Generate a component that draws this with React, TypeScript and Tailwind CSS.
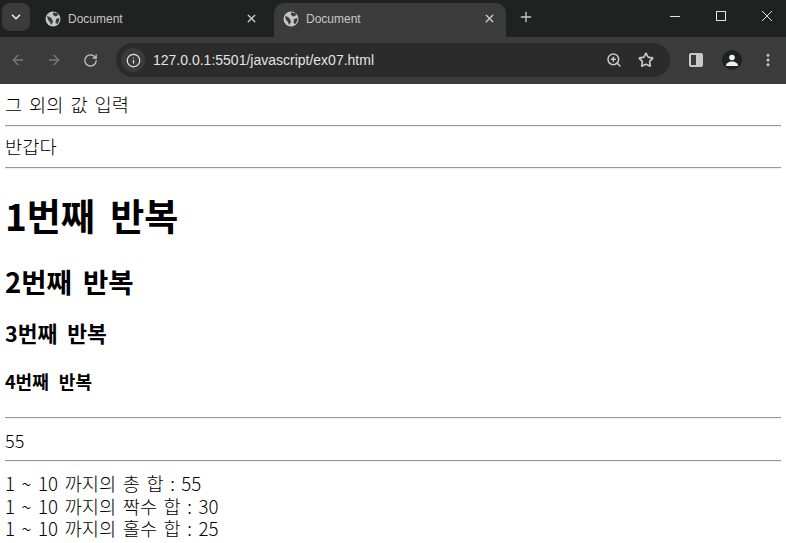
import React from 'react';
import { ArrowLeft, ArrowRight, RotateCw, Info, ZoomIn, Star, EllipsisVertical, X, Plus, ChevronDown } from 'lucide-react';

const pageFont = { fontFamily: '"Noto Sans CJK KR", "Noto Sans", sans-serif' };

function Globe() {
    return (
        <svg width="16" height="16" viewBox="0 0 16 16" className="shrink-0">
            <circle cx="8" cy="8" r="7.5" fill="#c4c7c5" />
            <path d="M2 5l3 1 2 2 1 3-2 3-1-3-2-2zM8 1.5l4 .5 1.5 2-3 1.5L8 4zM11 8l3-1 .5 2-2 4-2-1z" fill="#3c3c3c" />
        </svg>
    );
}

function Tab({ active }: { active?: boolean }) {
    return (
        <div className={`flex items-center w-[232px] h-[34px] rounded-t-[10px] pl-[9px] pr-[10px] pb-[3px] ${active ? 'bg-[#3b3b3b]' : ''}`}>
            <Globe />
            <span className="ml-[7px] flex-1 text-[12px] text-[#c7c7c7]" style={{ fontFamily: '"Liberation Sans", sans-serif' }}>Document</span>
            <X size={13} strokeWidth={2.5} className="text-[#c9c9c9]" />
        </div>
    );
}

export default function App() {
    return (
        <div className="w-[786px] h-[543px] overflow-hidden bg-white">
            {/* Tab strip */}
            <div className="flex h-[37px] items-end bg-[#202121]">
                <div className="flex items-center justify-center w-[28px] h-[28px] mb-[6px] ml-[2px] rounded-[8px] bg-[#3b3b3b]">
                    <ChevronDown size={14} strokeWidth={3} className="text-[#e3e3e3]" />
                </div>
                <div className="ml-[6px] flex gap-[6px]">
                    <Tab />
                    <Tab active />
                </div>
                <Plus size={16} strokeWidth={2} className="ml-[12px] mb-[12px] text-[#c9c9c9]" />
                <div className="ml-auto flex items-center mb-[16px] gap-[36px] pr-[14px]">
                    <svg width="10" height="10" viewBox="0 0 10 10" stroke="#e3e3e3" fill="none"><path d="M0 5.5h10" /></svg>
                    <svg width="10" height="10" viewBox="0 0 10 10" stroke="#e3e3e3" fill="none"><rect x=".5" y=".5" width="9" height="9" /></svg>
                    <svg width="10" height="10" viewBox="0 0 10 10" stroke="#e3e3e3" fill="none"><path d="M0 0l10 10M10 0L0 10" /></svg>
                </div>
            </div>

            {/* Toolbar */}
            <div className="flex h-[47px] items-center bg-[#3b3b3b] pb-[1px]">
                <div className="flex items-center gap-[20px] pl-[10px]">
                    <ArrowLeft size={16} strokeWidth={2} className="text-[#7b7b7b]" />
                    <ArrowRight size={16} strokeWidth={2} className="text-[#7b7b7b]" />
                    <RotateCw size={15} strokeWidth={2} className="ml-[1px] text-[#c9c9c9]" />
                </div>
                <div className="ml-[18px] flex items-center w-[554px] h-[34px] rounded-full bg-[#2b2b2b] pl-[5px] pr-[16px]">
                    <div className="flex items-center justify-center w-[24px] h-[24px] rounded-full bg-[#3b3b3b]">
                        <Info size={15} strokeWidth={2} className="text-[#e3e3e3]" />
                    </div>
                    <span className="ml-[8px] flex-1 text-[14px] text-[#e3e3e3]" style={{ fontFamily: '"Liberation Sans", sans-serif' }}>127.0.0.1:5501/javascript/ex07.html</span>
                    <ZoomIn size={16} strokeWidth={2.25} className="text-[#c9c9c9]" />
                    <Star size={16} strokeWidth={2.5} className="ml-[16px] text-[#c9c9c9]" />
                </div>
                <div className="ml-[19px] w-[14px] h-[14px] rounded-[2px] border-2 border-[#c9c9c9] flex justify-end">
                    <div className="w-[5px] bg-[#c9c9c9]" />
                </div>
                <div className="ml-[19px] flex items-center justify-center w-[20px] h-[20px] rounded-full bg-[#202121]">
                    <svg width="14" height="14" viewBox="0 0 14 14">
                        <circle cx="7" cy="4.5" r="2.8" fill="#f1f1f1" />
                        <path d="M1 13c0-3 3-4.5 6-4.5s6 1.5 6 4.5z" fill="#f1f1f1" />
                    </svg>
                </div>
                <EllipsisVertical size={16} strokeWidth={2.5} className="ml-[18px] text-[#c9c9c9]" />
            </div>

            {/* Page */}
            <div className="px-[5px] pt-[8px] text-[18.7px] leading-[23px] font-light text-black" style={pageFont}>
                <div className="[word-spacing:2.8px]">그 외의 값 입력</div>
                <hr className="mt-[10px] mb-[7px] border-t border-b border-t-[#999999] border-b-[#eeeeee]" />
                <div>반갑다</div>
                <hr className="mt-[10px] border-t border-b border-t-[#999999] border-b-[#eeeeee]" />
                <h1 className="mt-[21px] text-[37px] leading-[50px] font-bold [word-spacing:7px]">1번째 반복</h1>
                <h2 className="mt-[22px] text-[27.5px] leading-[38px] font-bold [word-spacing:5px]">2번째 반복</h2>
                <h3 className="mt-[19px] text-[21.5px] leading-[28px] font-bold [word-spacing:5px]">3번째 반복</h3>
                <h4 className="mt-[22px] text-[18px] leading-[24px] font-bold [word-spacing:6px]">4번째 반복</h4>
                <hr className="mt-[24px] mb-[10px] border-t border-b border-t-[#999999] border-b-[#eeeeee]" />
                <div className="text-[18px]">55</div>
                <hr className="mt-[8px] mb-[10px] border-t border-b border-t-[#999999] border-b-[#eeeeee]" />
                <div className="leading-[22.5px] [word-spacing:2.4px]">1 ~ 10 까지의 총 합 : 55</div>
                <div className="leading-[22.5px] [word-spacing:2.4px]">1 ~ 10 까지의 짝수 합 : 30</div>
                <div className="leading-[22.5px] [word-spacing:2.4px]">1 ~ 10 까지의 홀수 합 : 25</div>
            </div>
        </div>
    );
}
